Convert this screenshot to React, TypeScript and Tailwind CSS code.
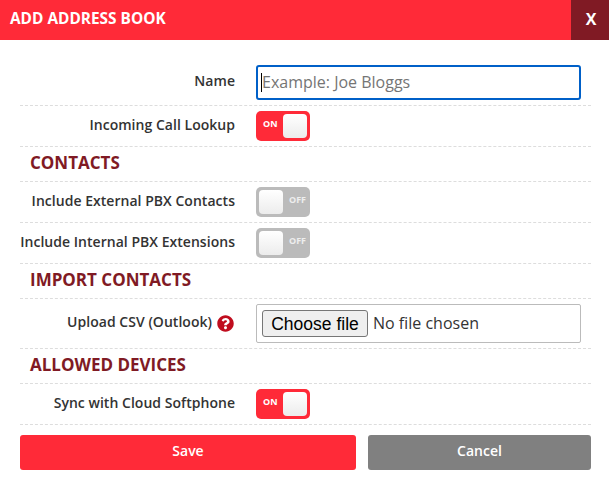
import { ReactNode } from "react";
import { FaQuestionCircle } from "react-icons/fa";

function Toggle({ on }: { on: boolean }) {
  return (
    <div
      className={`relative h-[30px] w-[54px] rounded-[5px] ${on ? "bg-[#ff2a38]" : "bg-[#bbbbbb]"}`}
    >
      <span
        className={`absolute top-[6px] text-[9px] leading-[14px] font-bold ${
          on ? "left-[7px] text-white" : "left-[33px] text-[#eeeeee]"
        }`}
      >
        {on ? "ON" : "OFF"}
      </span>
      <span
        className={`absolute top-[3px] h-[24px] w-[24px] rounded-[4px] bg-gradient-to-b from-white to-[#ececec] ${
          on ? "left-[27px]" : "left-[3px]"
        }`}
      />
    </div>
  );
}

function Row({ label, children, extra }: { label: string; children: ReactNode; extra?: ReactNode }) {
  return (
    <div className="flex items-center border-b border-dashed border-[#dddddd] py-[5px]">
      <div className="flex w-[215px] shrink-0 items-center justify-end gap-[5px] text-[14px] font-semibold tracking-[0.03px] whitespace-nowrap text-[#333333]">
        <span className="mb-[4px]">{label}</span>
        {extra}
      </div>
      <div className="ml-[21px] flex-1">{children}</div>
    </div>
  );
}

function Heading({ children }: { children: ReactNode }) {
  return (
    <div className="flex h-[35px] items-center border-b border-dashed border-[#dddddd] pb-[2px] pl-[10px] text-[17px] font-bold text-[#801a24]">
      {children}
    </div>
  );
}

export default function App() {
  return (
    <div className="h-[491px] w-[609px] overflow-hidden bg-white font-['Open_Sans',sans-serif]">
      <div className="flex h-[40px] items-center justify-between bg-[#ff2a38] text-white">
        <h2 className="pb-[3px] pl-[10px] text-[15.4px] font-bold">ADD ADDRESS BOOK</h2>
        <button className="flex h-full w-[38px] items-center justify-center bg-[#801a24] pb-[3px] pl-[2px] text-[16px] font-bold">
          X
        </button>
      </div>

      <div className="pt-[20px] pr-[18px] pl-[20px]">
        <Row label="Name">
          <div className="relative w-[325px]">
            <input
              type="text"
              placeholder="Example: Joe Bloggs"
              className="block h-[35px] w-full rounded-[3px] border-2 border-[#0060c8] pb-[2px] pl-[4px] text-[16px] outline-none placeholder:text-[#757575]"
            />
            {/* caret of the focused field */}
            <span className="absolute top-[8px] left-[5px] h-[19px] w-px bg-black" />
          </div>
        </Row>
        <Row label="Incoming Call Lookup">
          <Toggle on />
        </Row>
        <Heading>CONTACTS</Heading>
        <Row label="Include External PBX Contacts">
          <Toggle on={false} />
        </Row>
        <Row label="Include Internal PBX Extensions">
          <Toggle on={false} />
        </Row>
        <Heading>IMPORT CONTACTS</Heading>
        <Row
          label="Upload CSV (Outlook)"
          extra={<FaQuestionCircle className="mr-[1px] h-[17px] w-[17px] text-[#c00d1e]" />}
        >
          <div className="flex h-[39px] w-[325px] items-center rounded-[2px] border border-[#bbbbbb] pl-[5px]">
            <button className="h-[27px] w-[106px] rounded-[3px] border border-[#767676] bg-[#efefef] font-['Liberation_Sans',sans-serif] text-[17.5px] leading-[24px] text-black">
              Choose file
            </button>
            <span className="mb-[1px] ml-[5px] text-[16px] text-[#333333]">No file chosen</span>
          </div>
        </Row>
        <Heading>ALLOWED DEVICES</Heading>
        <Row label="Sync with Cloud Softphone">
          <Toggle on />
        </Row>

        <div className="mt-[10px] flex gap-[12px]">
          <button className="h-[35px] w-[336px] rounded-[3px] bg-[#ff2a38] pb-[4px] text-[14px] font-semibold text-white">
            Save
          </button>
          <button className="h-[35px] flex-1 rounded-[3px] bg-[#808080] pb-[4px] text-[14px] font-semibold text-white">
            Cancel
          </button>
        </div>
      </div>
    </div>
  );
}
